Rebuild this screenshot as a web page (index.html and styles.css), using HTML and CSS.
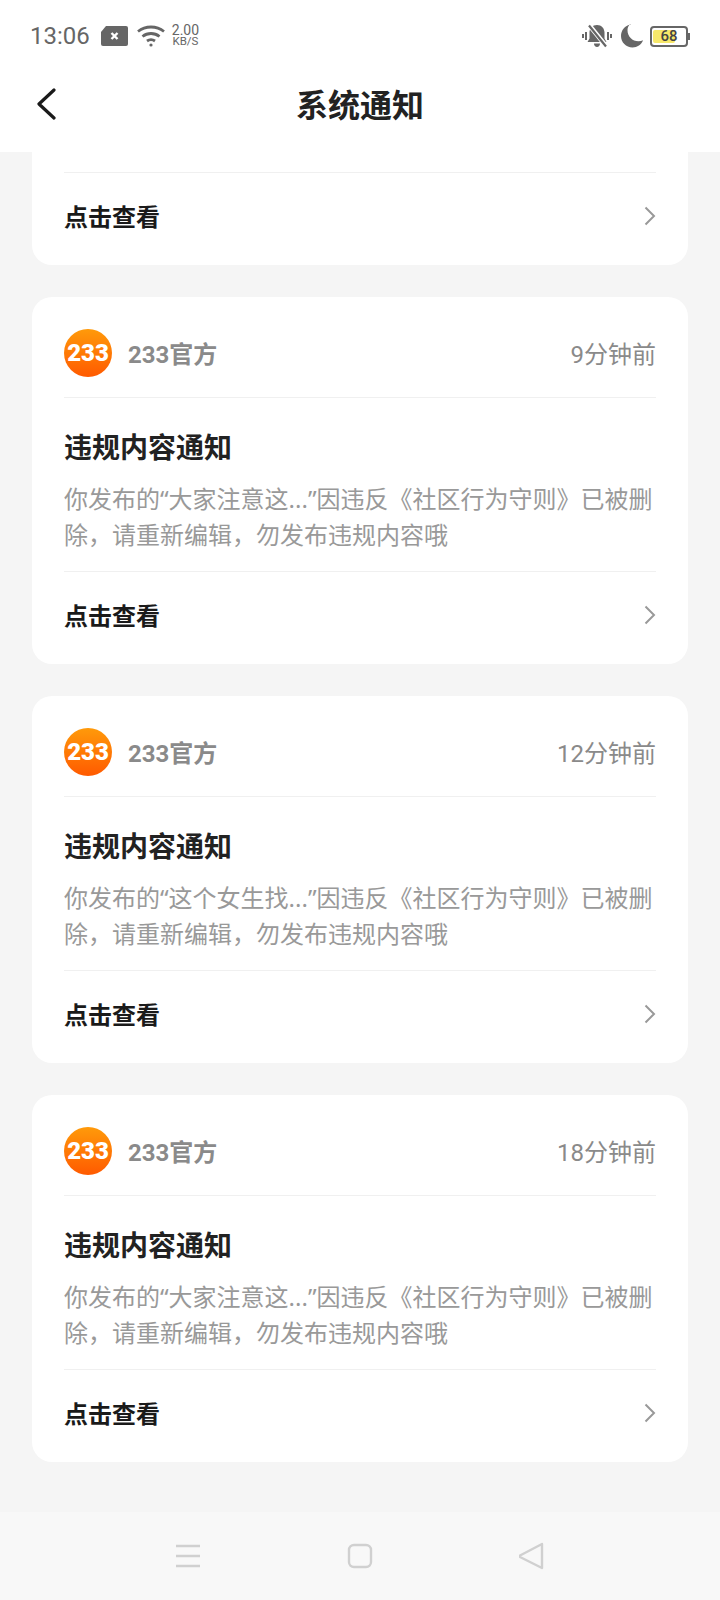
FILE: index.html
```html
<!DOCTYPE html>
<html lang="zh-CN">
<head>
    <meta charset="UTF-8">
    <meta name="viewport" content="width=device-width, initial-scale=1.0">
    <title>系统通知</title>
    <link rel="stylesheet" href="styles.css">
</head>
<body>
    <div class="phone">
        <div class="status-bar">
            <div class="status-left">
                <span class="clock">13:06</span>
                <svg class="sim" width="27" height="20" viewBox="0 0 27 20"><path d="M5 0H25a2 2 0 0 1 2 2V18a2 2 0 0 1-2 2H2a2 2 0 0 1-2-2V6z" fill="#666"/><path d="M10.500 7l6 6M16.500 7l-6 6" stroke="#fff" stroke-width="2.400"/></svg>
                <svg class="wifi" width="28" height="22" viewBox="0 0 28 22" fill="none" stroke="#666" stroke-width="2.800"><path d="M1 6.500C8.500 .5 19.500 .5 27 6.500"/><path d="M5.500 11.500C10.500 7.500 17.500 7.500 22.500 11.500"/><path d="M10 16c2.500-1.800 5.500-1.800 8 0"/><circle cx="14" cy="20" r="1.600" fill="#666" stroke="none"/></svg>
                <div class="speed"><span>2.00</span><span class="speed-unit">KB/S</span></div>
            </div>
            <div class="status-right">
                <svg width="32" height="24" viewBox="0 0 32 24" fill="#666"><path d="M16 1c-4.500 0-7.500 3.500-7.500 7.500v6L6.500 18h19l-2-3.500v-6C23.500 4.500 20.500 1 16 1z"/><path d="M13 19.500h6c0 2-1.300 3.500-3 3.500s-3-1.500-3-3.500z"/><path d="M8.500 1.500L25 22" stroke="#fff" stroke-width="4.500"/><path d="M8 1.500L25 22.500" stroke="#666" stroke-width="2.200"/><rect x="4" y="8" width="2" height="8"/><rect x="1" y="10" width="2" height="4"/><rect x="26" y="8" width="2" height="8"/><rect x="29" y="10" width="2" height="4"/></svg>
                <svg width="24" height="24" viewBox="0 0 24 24" fill="#666"><path d="M10.500 .5C5 1.500 1 6.200 1 12c0 6.300 5.100 11.500 11.500 11.500 4.800 0 8.900-3 10.600-7.200-1.400.6-3 .9-4.600.9-6.200 0-11-4.900-11-11 0-2.400.9-4.800 3-6.700z"/></svg>
                <div class="battery">
                    <div class="battery-body">
                        <div class="battery-level"></div>
                        <span class="battery-num">68</span>
                    </div>
                    <div class="battery-tip"></div>
                </div>
            </div>
        </div>

        <div class="title-bar">
            <svg class="back" width="20" height="32" viewBox="0 0 20 32" fill="none" stroke="#1a1a1a" stroke-width="3.200" stroke-linecap="round" stroke-linejoin="round"><path d="M18 2L3 16l15 14"/></svg>
            <h1 class="page-title">系统通知</h1>
        </div>

        <div class="list">
            <div class="card card-clipped">
                <div class="card-foot">
                    <span>点击查看</span>
                    <svg class="chevron" width="12" height="20" viewBox="0 0 12 20" fill="none" stroke="#999" stroke-width="2"><path d="M1.500 1.500L10 10l-8.500 8.500"/></svg>
                </div>
            </div>

            <div class="card">
                <div class="card-head">
                    <div class="logo">233</div>
                    <span class="sender">233官方</span>
                    <span class="time">9分钟前</span>
                </div>
                <div class="card-body">
                    <h2>违规内容通知</h2>
                    <p>你发布的“大家注意这...”因违反《社区行为守则》已被删除，请重新编辑，勿发布违规内容哦</p>
                </div>
                <div class="card-foot">
                    <span>点击查看</span>
                    <svg class="chevron" width="12" height="20" viewBox="0 0 12 20" fill="none" stroke="#999" stroke-width="2"><path d="M1.500 1.500L10 10l-8.500 8.500"/></svg>
                </div>
            </div>

            <div class="card">
                <div class="card-head">
                    <div class="logo">233</div>
                    <span class="sender">233官方</span>
                    <span class="time">12分钟前</span>
                </div>
                <div class="card-body">
                    <h2>违规内容通知</h2>
                    <p>你发布的“这个女生找...”因违反《社区行为守则》已被删除，请重新编辑，勿发布违规内容哦</p>
                </div>
                <div class="card-foot">
                    <span>点击查看</span>
                    <svg class="chevron" width="12" height="20" viewBox="0 0 12 20" fill="none" stroke="#999" stroke-width="2"><path d="M1.500 1.500L10 10l-8.500 8.500"/></svg>
                </div>
            </div>

            <div class="card">
                <div class="card-head">
                    <div class="logo">233</div>
                    <span class="sender">233官方</span>
                    <span class="time">18分钟前</span>
                </div>
                <div class="card-body">
                    <h2>违规内容通知</h2>
                    <p>你发布的“大家注意这...”因违反《社区行为守则》已被删除，请重新编辑，勿发布违规内容哦</p>
                </div>
                <div class="card-foot">
                    <span>点击查看</span>
                    <svg class="chevron" width="12" height="20" viewBox="0 0 12 20" fill="none" stroke="#999" stroke-width="2"><path d="M1.500 1.500L10 10l-8.500 8.500"/></svg>
                </div>
            </div>
        </div>

        <div class="nav-bar">
            <svg width="26" height="24" viewBox="0 0 26 24" fill="none" stroke="#d0d0d0" stroke-width="2.400"><path d="M1 2h24M1 12h24M1 22h24"/></svg>
            <svg width="26" height="26" viewBox="0 0 26 26" fill="none" stroke="#d0d0d0" stroke-width="2.400"><rect x="2" y="2" width="22" height="22" rx="5"/></svg>
            <svg width="26" height="28" viewBox="0 0 26 28" fill="none" stroke="#d0d0d0" stroke-width="2.400" stroke-linejoin="round"><path d="M23 2L1 13.500c-.5.500-.5 1 0 1.500L23 26z"/></svg>
        </div>
    </div>
</body>
</html>
```

FILE: styles.css
```css
* {
    margin: 0;
    padding: 0;
    box-sizing: border-box;
}

body {
    font-family: "Roboto", "Noto Sans CJK SC", sans-serif;
    background: #f5f5f5;
}

.phone {
    width: 720px;
    height: 1600px;
    display: flex;
    flex-direction: column;
    overflow: hidden;
}

.status-bar {
    height: 72px;
    flex-shrink: 0;
    background: white;
    display: flex;
    justify-content: space-between;
    align-items: center;
    padding: 0 30px;
    color: #666;
}

.status-left,
.status-right {
    display: flex;
    align-items: center;
}

.clock {
    font-size: 24px;
}

.sim {
    margin-left: 11px;
}

.wifi {
    margin-left: 9px;
}

.speed {
    display: flex;
    flex-direction: column;
    margin-left: 7px;
    margin-top: -2px;
    font-size: 14px;
    line-height: 12px;
    text-align: center;
}

.speed-unit {
    font-size: 11.5px;
    line-height: 10px;
}

.status-right {
    gap: 7px;
}

.battery {
    display: flex;
    align-items: center;
    margin-left: -1px;
}

.battery-body {
    position: relative;
    width: 38px;
    height: 21px;
    padding: 2px 1px;
    border: 2px solid #666;
    border-radius: 4px;
    overflow: hidden;
}

.battery-level {
    width: 68%;
    height: 100%;
    border-radius: 2px;
    background: #f7e86a;
}

.battery-num {
    position: absolute;
    inset: 0;
    text-align: center;
    font-size: 15px;
    line-height: 17px;
    font-weight: 500;
    color: #444;
}

.battery-tip {
    width: 2px;
    height: 7px;
    background: #666;
}

.title-bar {
    position: relative;
    height: 80px;
    flex-shrink: 0;
    background: white;
    display: flex;
    align-items: center;
    justify-content: center;
    padding-bottom: 18px;
}

.back {
    position: absolute;
    left: 36px;
    top: 16px;
}

.page-title {
    font-size: 32px;
    font-weight: 700;
    color: #222;
}

.list {
    flex: 1;
    overflow: hidden;
    padding: 0 32px;
    display: flex;
    flex-direction: column;
    gap: 32px;
}

.card {
    background: white;
    border-radius: 20px;
    padding: 0 32px;
}

.card-clipped {
    border-radius: 0 0 20px 20px;
    padding-top: 20px;
}

.card-head {
    height: 101px;
    display: flex;
    align-items: center;
    padding: 32px 0 20px;
    border-bottom: 1px solid #f0f0f0;
}

.logo {
    width: 48px;
    height: 48px;
    border-radius: 50%;
    background: linear-gradient(180deg, #ff9a0a 0%, #ff5a00 100%);
    color: white;
    font-size: 24px;
    font-weight: 900;
    line-height: 48px;
    text-align: center;
}

.sender {
    margin-left: 16px;
    margin-bottom: 2px;
    font-size: 24px;
    font-weight: 700;
    color: #8a8a8a;
}

.time {
    margin-left: auto;
    margin-bottom: 2px;
    font-size: 24px;
    color: #8a8a8a;
}

.card-body {
    padding: 31px 0 18px;
    border-bottom: 1px solid #f0f0f0;
}

.card-body h2 {
    font-size: 28px;
    line-height: 40px;
    font-weight: 700;
    color: #222;
}

.card-body p {
    margin-top: 12px;
    font-family: "Noto Sans", "Noto Sans CJK SC", sans-serif;
    font-size: 24px;
    line-height: 36px;
    color: #999;
}

.card-foot {
    height: 92px;
    padding-bottom: 7px;
    display: flex;
    justify-content: space-between;
    align-items: center;
    font-size: 24px;
    font-weight: 700;
    color: #1a1a1a;
}

.card-clipped .card-foot {
    height: 93px;
    border-top: 1px solid #f0f0f0;
}

.nav-bar {
    height: 88px;
    flex-shrink: 0;
    background: #f8f8f8;
    display: flex;
    justify-content: center;
    align-items: center;
    gap: 146px;
}
```
